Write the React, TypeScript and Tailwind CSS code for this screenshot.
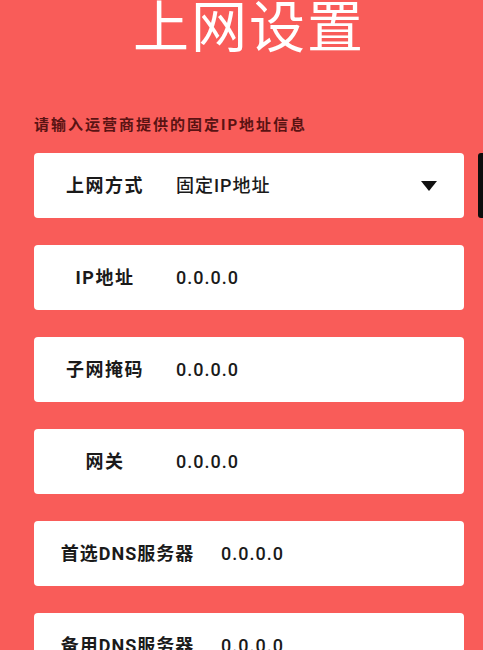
import React from "react";

const rows: { label: string; value: string; wide?: boolean; select?: boolean }[] = [
  { label: "上网方式", value: "固定IP地址", select: true },
  { label: "IP地址", value: "0.0.0.0" },
  { label: "子网掩码", value: "0.0.0.0" },
  { label: "网关", value: "0.0.0.0" },
  { label: "首选DNS服务器", value: "0.0.0.0", wide: true },
  { label: "备用DNS服务器", value: "0.0.0.0", wide: true },
];

export default function App() {
  return (
    <div
      className="relative w-[483px] h-[650px] overflow-hidden bg-[#f95c59]"
      style={{ fontFamily: 'Roboto, "Noto Sans CJK SC", sans-serif' }}
    >
      <div className="pl-[34px] w-[464px]">
        <h1 className="h-[62px] flex items-center justify-center text-white text-[56px] leading-none tracking-[2px] font-normal -mt-[3px]">
          上网设置
        </h1>
        <p className="mt-[55px] text-[15px] leading-[22px] tracking-[2px] font-bold text-[#5a1313]">
          请输入运营商提供的固定IP地址信息
        </p>
        <div className="mt-[17px] flex flex-col gap-[27px]">
          {rows.map((r) => (
            <div
              key={r.label}
              className="h-[65px] rounded-[4px] bg-white flex items-center pl-4 pr-[27px] text-[18px] text-[#1a1a1a]"
            >
              <div
                className={
                  r.wide
                    ? "w-[155px] text-center font-bold tracking-[1px] whitespace-nowrap"
                    : "w-[110px] text-center font-bold tracking-[1.5px] whitespace-nowrap"
                }
              >
                {r.label}
              </div>
              <div className="ml-4 flex-1 tracking-[1px] font-medium">{r.value}</div>
              {r.select && (
                <svg width="16" height="10" viewBox="0 0 16 10">
                  <polygon points="0,0 16,0 8,10" fill="#111" />
                </svg>
              )}
            </div>
          ))}
        </div>
      </div>
      <div className="absolute right-0 top-[153px] w-[5px] h-[65px] rounded-l-[3px] bg-[#0d0d0d]" />
    </div>
  );
}
